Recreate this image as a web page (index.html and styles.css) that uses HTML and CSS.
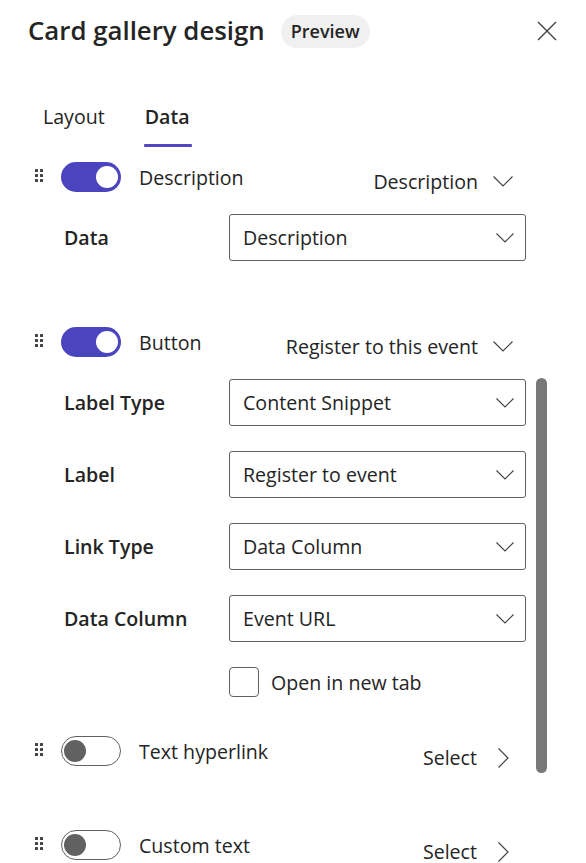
FILE: index.html
```html
<!DOCTYPE html>
<html lang="en">
<head>
<meta charset="utf-8">
<title>Card gallery design</title>
<link rel="stylesheet" href="styles.css">
</head>
<body>
<div class="panel">
  <header class="header">
    <h1 class="title">Card gallery design</h1>
    <span class="pill">Preview</span>
    <button class="close" aria-label="Close">
      <svg width="20" height="20" viewBox="0 0 20 20"><path d="M1 1 L19 19 M19 1 L1 19" stroke="#424242" stroke-width="1.4" fill="none"/></svg>
    </button>
  </header>

  <nav class="tabs">
    <span class="tab">Layout</span>
    <span class="tab active">Data</span>
  </nav>

  <div class="content">
    <section class="group">
      <div class="toggle-row">
        <span class="handle"><i></i><i></i><i></i><i></i><i></i><i></i></span>
        <span class="toggle on"><span class="knob"></span></span>
        <span class="toggle-label">Description</span>
        <span class="trail">Description
          <svg class="chev-down" width="20" height="11" viewBox="0 0 20 11"><path d="M0.5 0.5 L10 10 L19.5 0.5" stroke="#424242" stroke-width="1.2" fill="none"/></svg>
        </span>
      </div>
      <div class="fields">
        <div class="field">
          <span class="field-label">Data</span>
          <div class="select"><span>Description</span>
            <svg width="18" height="10" viewBox="0 0 18 10"><path d="M0.5 0.5 L9 9 L17.5 0.5" stroke="#424242" stroke-width="1.1" fill="none"/></svg>
          </div>
        </div>
      </div>
    </section>

    <section class="group second">
      <div class="toggle-row">
        <span class="handle"><i></i><i></i><i></i><i></i><i></i><i></i></span>
        <span class="toggle on"><span class="knob"></span></span>
        <span class="toggle-label">Button</span>
        <span class="trail">Register to this event
          <svg class="chev-down" width="20" height="11" viewBox="0 0 20 11"><path d="M0.5 0.5 L10 10 L19.5 0.5" stroke="#424242" stroke-width="1.2" fill="none"/></svg>
        </span>
      </div>
      <div class="fields">
        <div class="field">
          <span class="field-label">Label Type</span>
          <div class="select"><span>Content Snippet</span>
            <svg width="18" height="10" viewBox="0 0 18 10"><path d="M0.5 0.5 L9 9 L17.5 0.5" stroke="#424242" stroke-width="1.1" fill="none"/></svg>
          </div>
        </div>
        <div class="field">
          <span class="field-label">Label</span>
          <div class="select"><span>Register to event</span>
            <svg width="18" height="10" viewBox="0 0 18 10"><path d="M0.5 0.5 L9 9 L17.5 0.5" stroke="#424242" stroke-width="1.1" fill="none"/></svg>
          </div>
        </div>
        <div class="field">
          <span class="field-label">Link Type</span>
          <div class="select"><span>Data Column</span>
            <svg width="18" height="10" viewBox="0 0 18 10"><path d="M0.5 0.5 L9 9 L17.5 0.5" stroke="#424242" stroke-width="1.1" fill="none"/></svg>
          </div>
        </div>
        <div class="field">
          <span class="field-label">Data Column</span>
          <div class="select"><span>Event URL</span>
            <svg width="18" height="10" viewBox="0 0 18 10"><path d="M0.5 0.5 L9 9 L17.5 0.5" stroke="#424242" stroke-width="1.1" fill="none"/></svg>
          </div>
        </div>
        <div class="check-row">
          <span class="checkbox"></span>
          <span class="check-label">Open in new tab</span>
        </div>
      </div>
    </section>

    <section class="group third">
      <div class="toggle-row">
        <span class="handle"><i></i><i></i><i></i><i></i><i></i><i></i></span>
        <span class="toggle off"><span class="knob"></span></span>
        <span class="toggle-label">Text hyperlink</span>
        <span class="trail select-link">Select
          <svg class="chev-right" width="11" height="20" viewBox="0 0 11 20"><path d="M0.5 0.5 L10 10 L0.5 19.5" stroke="#424242" stroke-width="1.2" fill="none"/></svg>
        </span>
      </div>
    </section>

    <section class="group fourth">
      <div class="toggle-row">
        <span class="handle"><i></i><i></i><i></i><i></i><i></i><i></i></span>
        <span class="toggle off"><span class="knob"></span></span>
        <span class="toggle-label">Custom text</span>
        <span class="trail select-link">Select
          <svg class="chev-right" width="11" height="20" viewBox="0 0 11 20"><path d="M0.5 0.5 L10 10 L0.5 19.5" stroke="#424242" stroke-width="1.2" fill="none"/></svg>
        </span>
      </div>
    </section>

    <div class="scrollbar"></div>
  </div>
</div>
</body>
</html>
```

FILE: styles.css
```css
* { box-sizing: border-box; }
html, body { margin: 0; padding: 0; background: #ffffff; }
body {
  font-family: "Open Sans", "Noto Sans", "Liberation Sans", sans-serif;
  color: #242424;
  overflow: hidden;
  height: 863px;
}
.panel { width: 586px; position: relative; }

.header {
  display: flex;
  align-items: center;
  height: 62px;
  padding-left: 28px;
}
.title {
  margin: 0;
  font-size: 25.8px;
  font-weight: 600;
  line-height: 34px;
  margin-top: -2px;
}
.pill {
  margin-left: 16px;
  height: 33px;
  padding: 0 10px;
  display: inline-flex;
  align-items: center;
  background: #f0f0f0;
  border-radius: 17px;
  font-size: 18px;
  font-weight: 600;
}
.close {
  margin-left: auto;
  margin-right: 29px;
  border: 0;
  background: none;
  padding: 0;
  width: 20px;
  height: 20px;
  display: flex;
}

.tabs {
  display: flex;
  gap: 40px;
  padding-left: 43px;
  height: 86px;
  align-items: flex-end;
}
.tab {
  font-size: 19.6px;
  line-height: 26px;
  padding-bottom: 18px;
  position: relative;
}
.tab.active { font-weight: 600; }
.tab.active::after {
  content: "";
  position: absolute;
  left: -1px;
  right: -2px;
  bottom: 1px;
  height: 3px;
  background: #5047c5;
  border-radius: 1px;
}

.content { position: relative; padding-top: 14px; }

.toggle-row {
  display: flex;
  align-items: center;
  height: 30px;
  padding-left: 35px;
  padding-right: 73px;
}
.handle {
  display: grid;
  grid-template-columns: 3px 3px;
  grid-template-rows: 3px 3px 3px;
  gap: 2px 2px;
  margin-right: 18px;
  margin-top: -3px;
}
.handle i { display: block; width: 3px; height: 3px; background: #424242; border-radius: 0.5px; }
.toggle {
  width: 60px;
  height: 30px;
  border-radius: 15px;
  display: flex;
  align-items: center;
  padding: 0 3px;
  flex-shrink: 0;
}
.toggle.on { background: #4b44bf; justify-content: flex-end; }
.toggle.off { border: 1px solid #616161; background: #fff; padding: 0 2px; }
.knob { width: 22px; height: 22px; border-radius: 50%; }
.toggle.on .knob { background: #fff; }
.toggle.off .knob { background: #616161; }
.toggle-label {
  margin-left: 18px;
  font-size: 19.6px;
  margin-top: 1px;
}
.trail {
  margin-left: auto;
  display: flex;
  align-items: center;
  font-size: 19.6px;
  margin-top: 9px;
}
.chev-down { margin-left: 15px; }
.chev-right { margin-left: 21px; margin-right: 4px; }
.select-link { margin-top: 13px; }

.fields {
  display: flex;
  flex-direction: column;
  gap: 25px;
  margin-top: 22px;
  padding-left: 64px;
}
.field {
  display: grid;
  grid-template-columns: 165px 297px;
  align-items: center;
}
.field-label {
  font-size: 19.6px;
  font-weight: 600;
}
.select {
  height: 47px;
  border: 1px solid #616161;
  border-radius: 3px;
  display: flex;
  align-items: center;
  justify-content: space-between;
  padding: 0 11px 0 13px;
  font-size: 19.6px;
}
.check-row {
  display: flex;
  align-items: center;
  margin-left: 165px;
}
.checkbox {
  width: 30px;
  height: 30px;
  border: 1px solid #616161;
  border-radius: 4px;
}
.check-label {
  margin-left: 12px;
  font-size: 19.6px;
}

.group.second { margin-top: 66px; }
.group.third { margin-top: 39px; }
.group.fourth { margin-top: 64px; }

.scrollbar {
  position: absolute;
  left: 536px;
  top: 230px;
  width: 11px;
  height: 395px;
  background: #787878;
  border-radius: 6px;
}
```
